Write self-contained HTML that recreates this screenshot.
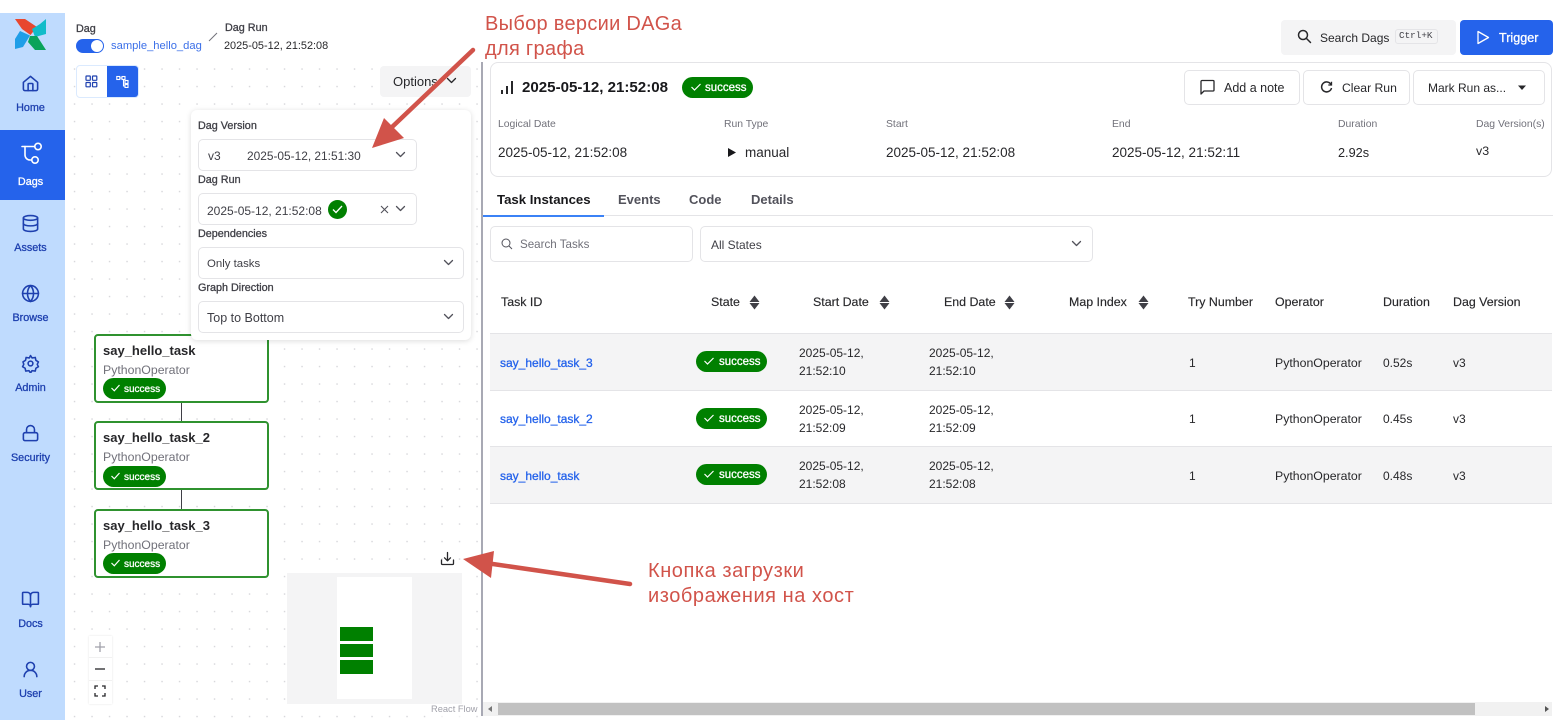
<!DOCTYPE html>
<html lang="en"><head><meta charset="utf-8"><title>Airflow Dag Run</title>
<style>
*{box-sizing:border-box}
html{background:#fff}
html,body{margin:0;padding:0;width:1560px;height:720px;overflow:hidden}
body{background:#fff;font-family:"Liberation Sans",sans-serif;color:#27272a;filter:blur(.3px)}
.a{position:absolute}
.t{position:absolute;white-space:nowrap;line-height:20px;font-size:12.5px}
.b{font-weight:bold}
.m{-webkit-text-stroke:.3px currentColor}
.h{-webkit-text-stroke:.15px currentColor}
.nav{position:absolute;left:0;width:61px;text-align:center;font-size:10.800px;line-height:14px;color:#1e40af;-webkit-text-stroke:.3px currentColor}
.ic{position:absolute;fill:none;stroke:#1e40af;stroke-width:2;stroke-linecap:round;stroke-linejoin:round}
.box{position:absolute;background:#fff;border:1px solid #e4e4e7;border-radius:5px}
.chev{position:absolute;fill:none;stroke:#52525b;stroke-width:1.300;stroke-linecap:round;stroke-linejoin:round}
.badge{position:absolute;background:#008000;border-radius:11px;color:#fff;font-size:11.500px;line-height:23px;-webkit-text-stroke:.3px #fff;white-space:nowrap}
.badge svg{position:absolute;fill:none;stroke:#fff;stroke-width:1.200}
.sm{font-size:10px}
.node{position:absolute;left:94px;width:175px;height:69px;background:#fff;border:2px solid #2f922f;border-radius:4px}
.row{position:absolute;left:490px;width:1062px;border-bottom:1px solid #e4e4e7}
.lnk{color:#2563eb;font-size:12px;-webkit-text-stroke:.3px currentColor}
.s{position:absolute;fill:#3f3f46}
.red{position:absolute;white-space:nowrap;color:#d1534a;font-size:20px;line-height:26px}
.lab{font-size:10.800px;color:#3f3f46;-webkit-text-stroke:.3px currentColor}
.cap{font-size:10.400px;color:#71717a}
.dt{font-size:12px;line-height:18px}
.hd{font-size:12.400px;-webkit-text-stroke:.15px currentColor}
</style></head><body>

<!-- graph background -->
<div class="a" style="left:65px;top:60px;width:416px;height:660px;background-image:radial-gradient(circle,#d4d4d8 0.6px,transparent 0.9px);background-size:17.5px 17.5px;background-position:.8px .3px"></div>

<!-- sidebar -->
<div class="a" style="left:0;top:13px;width:65px;height:707px;background:#bfdbfe"></div>
<div class="a" style="left:0;top:130px;width:65px;height:70px;background:#2563eb"></div>
<svg class="a" style="left:0;top:0" width="60" height="60" viewBox="0 0 60 60">
<path d="M15 19 25 19 37 27 30.500 35 22 29Z" fill="#e8472f"/>
<path d="M46 19 46 34 35 37 32 29 40 24Z" fill="#11bcc9"/>
<path d="M46 50 35 50 28 42 30 36 37 36Z" fill="#0aa35a"/>
<path d="M15 49 15 39 20 31 30 35.500 23 47Z" fill="#1f9ee8"/></svg>

<svg class="ic" style="left:21px;top:74px" width="19" height="19" viewBox="0 0 24 24"><path d="M3 10.500 12 3l9 7.500V19a2 2 0 0 1-2 2H5a2 2 0 0 1-2-2z"/><path d="M9 21v-8a1 1 0 0 1 1-1h4a1 1 0 0 1 1 1v8"/></svg>
<div class="nav" style="top:101px">Home</div>
<svg class="ic" style="left:20px;top:142px;stroke:#fff;stroke-width:1.600" width="23" height="23" viewBox="0 0 23 23"><path d="M2 4.500H14.500"/><path d="M5 4.500V13a5 5 0 0 0 5 5H11.500"/><circle cx="18" cy="4.500" r="3.200"/><circle cx="15" cy="18" r="3.200"/></svg>
<div class="nav" style="top:175px;color:#fff">Dags</div>
<svg class="ic" style="left:21px;top:214px" width="19" height="19" viewBox="0 0 24 24"><ellipse cx="12" cy="5" rx="9" ry="3"/><path d="M3 5v14c0 1.700 4 3 9 3s9-1.300 9-3V5"/><path d="M3 12c0 1.700 4 3 9 3s9-1.300 9-3"/></svg>
<div class="nav" style="top:241px">Assets</div>
<svg class="ic" style="left:21px;top:284px" width="19" height="19" viewBox="0 0 24 24"><circle cx="12" cy="12" r="10"/><path d="M2 12h20"/><path d="M12 2a15 15 0 0 1 0 20a15 15 0 0 1 0-20z"/></svg>
<div class="nav" style="top:311px">Browse</div>
<svg class="ic" style="left:21px;top:354px" width="19" height="19" viewBox="0 0 24 24"><path d="M12 2l2 3 4-.6.800 3.600 3.200 2-1.500 3 1.500 3-3.200 2-.8 3.600-4-.6-2 3-2-3-4 .6-.8-3.600-3.200-2 1.500-3L2.500 10l3.200-2 .8-3.600 4 .6z"/><circle cx="12" cy="12" r="3"/></svg>
<div class="nav" style="top:381px">Admin</div>
<svg class="ic" style="left:21px;top:424px" width="19" height="19" viewBox="0 0 24 24"><rect x="3" y="11" width="18" height="10" rx="2"/><path d="M7 11V7a5 5 0 0 1 10 0v4"/></svg>
<div class="nav" style="top:451px">Security</div>
<svg class="ic" style="left:21px;top:590px" width="19" height="19" viewBox="0 0 24 24"><path d="M12 7v14"/><path d="M3 18a1 1 0 0 1-1-1V4a1 1 0 0 1 1-1h5a4 4 0 0 1 4 4 4 4 0 0 1 4-4h5a1 1 0 0 1 1 1v13a1 1 0 0 1-1 1h-6a3 3 0 0 0-3 3 3 3 0 0 0-3-3z"/></svg>
<div class="nav" style="top:617px">Docs</div>
<svg class="ic" style="left:21px;top:660px" width="19" height="19" viewBox="0 0 24 24"><circle cx="12" cy="8" r="5"/><path d="M20 21a8 8 0 0 0-16 0"/></svg>
<div class="nav" style="top:687px">User</div>

<!-- breadcrumb -->
<div class="t lab" style="left:76px;top:19px">Dag</div>
<div class="a" style="left:76px;top:39px;width:28px;height:14px;background:#2563eb;border-radius:7px"></div>
<div class="a" style="left:91px;top:40px;width:12px;height:12px;background:#fff;border-radius:50%"></div>
<div class="t" style="left:111px;top:36px;font-size:11.200px;color:#3b6fe8">sample_hello_dag</div>
<svg class="a" style="left:208px;top:32px" width="10" height="10"><path d="M1 9 9 1" stroke="#71717a" stroke-width="1"/></svg>
<div class="t lab" style="left:225px;top:18px">Dag Run</div>
<div class="t" style="left:224px;top:36px;font-size:10.900px">2025-05-12, 21:52:08</div>

<!-- view toggle -->
<div class="a" style="left:76px;top:65px;width:63px;height:33px;border:1px solid #dbeafe;border-radius:4px;background:#fff"></div>
<div class="a" style="left:107px;top:66px;width:31px;height:31px;background:#2563eb;border-radius:0 3px 3px 0"></div>
<svg class="a" style="left:85px;top:75px" width="13" height="13" viewBox="0 0 13 13" fill="none" stroke="#1e40af" stroke-width="1.200"><rect x="1" y="1" width="4.300" height="4.300" rx=".5"/><rect x="7.500" y="1" width="4.300" height="4.300" rx=".5"/><rect x="1" y="7.500" width="4.300" height="4.300" rx=".5"/><rect x="7.500" y="7.500" width="4.300" height="4.300" rx=".5"/></svg>
<svg class="a" style="left:116px;top:75px" width="13" height="13" viewBox="0 0 13 13" fill="none" stroke="#fff" stroke-width="1.100"><rect x=".8" y="1.500" width="3" height="3"/><rect x="6" y="1.500" width="3" height="3"/><rect x="9" y="5.500" width="3" height="3"/><rect x="9" y="9.500" width="3" height="3"/><path d="M4 3H6M7.500 4.500V11H9"/></svg>

<!-- Options button -->
<div class="a" style="left:380px;top:66px;width:91px;height:31px;background:#f4f4f5;border-radius:4px"></div>
<div class="t" style="left:393px;top:72px;font-size:13px">Options</div>
<svg class="chev" style="left:446px;top:77px;stroke:#27272a" width="11" height="8"><path d="M1.500 1.500 5.500 5.500 9.500 1.500"/></svg>

<!-- nodes -->
<div class="a" style="left:181px;top:403px;width:1px;height:19px;background:#3f3f46"></div>
<div class="a" style="left:181px;top:490px;width:1px;height:20px;background:#3f3f46"></div>

<div class="node" style="top:334px"></div>
<div class="t b" style="left:103px;top:341px;font-size:13px">say_hello_task</div>
<div class="t" style="left:103px;top:360px;font-size:12.300px;color:#71717a">PythonOperator</div>
<div class="badge sm" style="left:103px;top:378px;width:63px;height:21px;padding-left:21px;font-size:10px"><svg style="left:8px;top:6px" width="9" height="8"><path d="M.5 4 3.300 6.800 8.500 1"/></svg>success</div>

<div class="node" style="top:421px"></div>
<div class="t b" style="left:103px;top:428px;font-size:13px">say_hello_task_2</div>
<div class="t" style="left:103px;top:447px;font-size:12.300px;color:#71717a">PythonOperator</div>
<div class="badge sm" style="left:103px;top:466px;width:63px;height:21px;padding-left:21px;font-size:10px"><svg style="left:8px;top:6px" width="9" height="8"><path d="M.5 4 3.300 6.800 8.500 1"/></svg>success</div>

<div class="node" style="top:509px"></div>
<div class="t b" style="left:103px;top:516px;font-size:13px">say_hello_task_3</div>
<div class="t" style="left:103px;top:535px;font-size:12.300px;color:#71717a">PythonOperator</div>
<div class="badge sm" style="left:103px;top:553px;width:63px;height:21px;padding-left:21px;font-size:10px"><svg style="left:8px;top:6px" width="9" height="8"><path d="M.5 4 3.300 6.800 8.500 1"/></svg>success</div>

<!-- options panel -->
<div class="a" style="left:191px;top:110px;width:280px;height:230px;background:#fff;border-radius:6px;box-shadow:0 1px 6px rgba(0,0,0,.14)"></div>
<div class="t lab" style="left:198px;top:116px">Dag Version</div>
<div class="box" style="left:198px;top:139px;width:219px;height:32px"></div>
<div class="t" style="left:208px;top:146px;font-size:12px;color:#3f3f46">v3</div>
<div class="t" style="left:247px;top:146px;font-size:11.900px;color:#3f3f46">2025-05-12, 21:51:30</div>
<svg class="chev" style="left:395px;top:151px" width="11" height="8"><path d="M1.500 1.500 5.500 5.500 9.500 1.500"/></svg>
<div class="t lab" style="left:198px;top:170px">Dag Run</div>
<div class="box" style="left:198px;top:193px;width:219px;height:32px"></div>
<div class="t" style="left:207px;top:201px;font-size:12px;color:#3f3f46">2025-05-12, 21:52:08</div>
<div class="a" style="left:328px;top:200px;width:19px;height:19px;border-radius:50%;background:#008000"></div>
<svg class="a" style="left:332px;top:205px" width="11" height="9" fill="none" stroke="#fff" stroke-width="1.300"><path d="M1 4.500 4 7.500 10 1"/></svg>
<svg class="a" style="left:380px;top:205px" width="9" height="9" stroke="#52525b" stroke-width="1.100"><path d="M1 1 8 8M8 1 1 8"/></svg>
<svg class="chev" style="left:395px;top:205px" width="11" height="8"><path d="M1.500 1.500 5.500 5.500 9.500 1.500"/></svg>
<div class="t lab" style="left:198px;top:224px">Dependencies</div>
<div class="box" style="left:198px;top:247px;width:266px;height:32px"></div>
<div class="t" style="left:207px;top:254px;font-size:11.400px;color:#3f3f46">Only tasks</div>
<svg class="chev" style="left:443px;top:259px" width="11" height="8"><path d="M1.500 1.500 5.500 5.500 9.500 1.500"/></svg>
<div class="t lab" style="left:198px;top:278px">Graph Direction</div>
<div class="box" style="left:198px;top:301px;width:266px;height:32px"></div>
<div class="t" style="left:207px;top:308px;font-size:12.500px;color:#3f3f46">Top to Bottom</div>
<svg class="chev" style="left:443px;top:313px" width="11" height="8"><path d="M1.500 1.500 5.500 5.500 9.500 1.500"/></svg>

<!-- download, minimap, controls -->
<svg class="a" style="left:440px;top:551px" width="15" height="15" viewBox="0 0 15 15" fill="none" stroke="#27272a" stroke-width="1.300" stroke-linecap="round" stroke-linejoin="round"><path d="M7.500 1.500V9.500M4.500 6.800 7.500 9.800 10.500 6.800"/><path d="M1.500 9V12.500a1 1 0 0 0 1 1H12.500a1 1 0 0 0 1-1V9"/></svg>
<div class="a" style="left:287px;top:573px;width:175px;height:131px;background:#f4f4f5"></div>
<div class="a" style="left:337px;top:577px;width:75px;height:122px;background:#fff"></div>
<div class="a" style="left:340px;top:627px;width:33px;height:14px;background:#008000"></div>
<div class="a" style="left:340px;top:644px;width:33px;height:13px;background:#008000"></div>
<div class="a" style="left:340px;top:660px;width:33px;height:14px;background:#008000"></div>
<div class="a" style="left:428px;top:704px;width:48px;height:15px;background:rgba(255,255,255,.6)"></div>
<div class="t" style="left:431px;top:699px;font-size:9.300px;color:#a1a1aa">React Flow</div>
<div class="a" style="left:89px;top:636px;width:23px;height:68px;background:#fff;box-shadow:0 0 2px rgba(0,0,0,.12)"></div>
<div class="a" style="left:89px;top:657px;width:23px;height:1px;background:#f1f1f1"></div>
<div class="a" style="left:89px;top:680px;width:23px;height:1px;background:#f1f1f1"></div>
<svg class="a" style="left:88px;top:635px" width="24" height="69" fill="none" stroke-width="1.300"><path d="M12 7V17M7 12H17" stroke="#a1a1aa"/><path d="M7 34H17" stroke="#27272a"/><path d="M7 54V51H10M14 51H17V54M17 58V61H14M10 61H7V58" stroke="#27272a"/></svg>

<!-- divider -->
<div class="a" style="left:481px;top:62px;width:2px;height:654px;background:#a8a9b4"></div>

<!-- top right -->
<div class="a" style="left:1281px;top:20px;width:175px;height:35px;background:#f4f4f5;border-radius:4px"></div>
<svg class="a" style="left:1297px;top:29px" width="15" height="15" viewBox="0 0 15 15" fill="none" stroke="#27272a" stroke-width="1.500" stroke-linecap="round"><circle cx="6" cy="6" r="4.500"/><path d="M9.500 9.500 13.500 13.500"/></svg>
<div class="t" style="left:1320px;top:28px;font-size:12px">Search Dags</div>
<div class="a" style="left:1395px;top:29px;width:43px;height:15px;background:#f4f4f5;border:1px solid #e4e4e7;border-radius:3px"></div>
<div class="t" style="left:1399px;top:26px;font-size:9.300px;font-family:'Liberation Mono',monospace;color:#3f3f46">Ctrl+K</div>
<div class="a" style="left:1460px;top:20px;width:93px;height:35px;background:#2563eb;border-radius:4px"></div>
<svg class="a" style="left:1476px;top:30px" width="14" height="15" viewBox="0 0 14 15" fill="none" stroke="#fff" stroke-width="1.300" stroke-linejoin="round"><path d="M2 1.500 12.500 7.500 2 13.500Z"/></svg>
<div class="t m" style="left:1499px;top:28px;font-size:12.600px;color:#fff">Trigger</div>

<!-- header card -->
<div class="a" style="left:490px;top:62px;width:1062px;height:115px;border:1px solid #e4e4e7;border-radius:8px"></div>
<svg class="a" style="left:500px;top:80px" width="14" height="15" fill="#27272a"><rect x="1" y="10" width="2" height="4"/><rect x="6" y="6" width="2" height="8"/><rect x="11" y="1" width="2" height="13"/></svg>
<div class="t b" style="left:522px;top:78px;font-size:15.100px;color:#18181b">2025-05-12, 21:52:08</div>
<div class="badge" style="left:682px;top:77px;width:71px;height:21px;padding-left:23px"><svg style="left:9px;top:6px" width="10" height="8"><path d="M.5 4 3.500 7 9.500 1"/></svg>success</div>

<div class="box" style="left:1184px;top:70px;width:116px;height:35px"></div>
<svg class="a" style="left:1199px;top:79px" width="16" height="16" viewBox="0 0 16 16" fill="none" stroke="#27272a" stroke-width="1.300" stroke-linejoin="round"><path d="M2 2.500a1 1 0 0 1 1-1H14a1 1 0 0 1 1 1V11a1 1 0 0 1-1 1H5L2 15z"/></svg>
<div class="t" style="left:1224px;top:78px;font-size:12.500px">Add a note</div>
<div class="box" style="left:1303px;top:70px;width:107px;height:35px"></div>
<svg class="a" style="left:1320px;top:81px" width="13" height="13" viewBox="0 0 13 13" fill="none" stroke="#27272a" stroke-width="1.500"><path d="M11 3.500A5 5 0 1 0 11.500 7"/><path d="M11.500 .8V4H8.300" stroke-width="1.300"/></svg>
<div class="t" style="left:1342px;top:78px;font-size:12.200px">Clear Run</div>
<div class="box" style="left:1413px;top:70px;width:132px;height:35px"></div>
<div class="t" style="left:1428px;top:78px;font-size:12px">Mark Run as...</div>
<svg class="a" style="left:1517px;top:85px" width="10" height="6" fill="#27272a"><path d="M1 .5H9L5 5Z"/></svg>

<div class="t cap" style="left:498px;top:115px">Logical Date</div>
<div class="t cap" style="left:724px;top:115px">Run Type</div>
<div class="t cap" style="left:886px;top:115px">Start</div>
<div class="t cap" style="left:1112px;top:115px">End</div>
<div class="t cap" style="left:1338px;top:115px">Duration</div>
<div class="t cap" style="left:1476px;top:115px">Dag Version(s)</div>
<div class="t" style="left:498px;top:143px;font-size:13.500px">2025-05-12, 21:52:08</div>
<svg class="a" style="left:728px;top:148px" width="8" height="9" fill="#18181b"><path d="M0 0 8 4.500 0 9Z"/></svg>
<div class="t" style="left:745px;top:143px;font-size:13.500px">manual</div>
<div class="t" style="left:886px;top:143px;font-size:13.500px">2025-05-12, 21:52:08</div>
<div class="t" style="left:1112px;top:143px;font-size:13.500px">2025-05-12, 21:52:11</div>
<div class="t" style="left:1338px;top:143px;font-size:12.700px">2.92s</div>
<div class="t" style="left:1476px;top:141px;font-size:12.400px">v3</div>

<!-- tabs -->
<div class="a" style="left:483px;top:215px;width:1070px;height:1px;background:#e4e4e7"></div>
<div class="a" style="left:483px;top:215px;width:121px;height:2px;background:#3b82f6"></div>
<div class="t b" style="left:497px;top:190px;font-size:13.200px;color:#18181b">Task Instances</div>
<div class="t b" style="left:618px;top:190px;font-size:13px;color:#52525b">Events</div>
<div class="t b" style="left:689px;top:190px;font-size:13px;color:#52525b">Code</div>
<div class="t b" style="left:751px;top:190px;font-size:13px;color:#52525b">Details</div>

<!-- filters -->
<div class="box" style="left:490px;top:226px;width:203px;height:36px"></div>
<svg class="a" style="left:501px;top:238px" width="12" height="12" viewBox="0 0 12 12" fill="none" stroke="#52525b" stroke-width="1"><circle cx="5" cy="5" r="4"/><path d="M8 8 11 11"/></svg>
<div class="t" style="left:520px;top:235px;font-size:11.600px;color:#71717a">Search Tasks</div>
<div class="box" style="left:700px;top:226px;width:393px;height:36px"></div>
<div class="t" style="left:711px;top:235px;font-size:12px;color:#3f3f46">All States</div>
<svg class="chev" style="left:1071px;top:240px" width="11" height="8"><path d="M1.500 1.500 5.500 5.500 9.500 1.500"/></svg>

<!-- table head -->
<div class="t hd" style="left:501px;top:292px">Task ID</div>
<div class="t hd" style="left:711px;top:292px">State</div>
<svg class="s" style="left:749px;top:295px" width="11" height="15"><path d="M5.500 .5 10.500 7H.5ZM.5 8H10.500L5.500 14.500Z"/></svg>
<div class="t hd" style="left:813px;top:292px">Start Date</div>
<svg class="s" style="left:879px;top:295px" width="11" height="15"><path d="M5.500 .5 10.500 7H.5ZM.5 8H10.500L5.500 14.500Z"/></svg>
<div class="t hd" style="left:944px;top:292px">End Date</div>
<svg class="s" style="left:1004px;top:295px" width="11" height="15"><path d="M5.500 .5 10.500 7H.5ZM.5 8H10.500L5.500 14.500Z"/></svg>
<div class="t hd" style="left:1069px;top:292px">Map Index</div>
<svg class="s" style="left:1138px;top:295px" width="11" height="15"><path d="M5.500 .5 10.500 7H.5ZM.5 8H10.500L5.500 14.500Z"/></svg>
<div class="t hd" style="left:1188px;top:292px">Try Number</div>
<div class="t hd" style="left:1275px;top:292px">Operator</div>
<div class="t hd" style="left:1383px;top:292px">Duration</div>
<div class="t hd" style="left:1453px;top:292px">Dag Version</div>

<!-- rows -->
<div class="a" style="left:490px;top:333px;width:1062px;height:1px;background:#e4e4e7"></div>
<div class="row" style="top:334px;height:57px;background:#f4f4f5"></div>
<div class="row" style="top:391px;height:56px;background:#fff"></div>
<div class="row" style="top:447px;height:57px;background:#f4f4f5"></div>

<div class="t lnk" style="left:500px;top:353px">say_hello_task_3</div>
<div class="badge" style="left:696px;top:351px;width:71px;height:21px;padding-left:23px"><svg style="left:8px;top:6px" width="10" height="8"><path d="M.5 4 3.500 7 9.500 1"/></svg>success</div>
<div class="t dt" style="left:799px;top:344px">2025-05-12,<br>21:52:10</div>
<div class="t dt" style="left:929px;top:344px">2025-05-12,<br>21:52:10</div>
<div class="t" style="left:1189px;top:353px;font-size:12px">1</div>
<div class="t" style="left:1275px;top:353px;font-size:12.300px">PythonOperator</div>
<div class="t" style="left:1383px;top:353px;font-size:12px">0.52s</div>
<div class="t" style="left:1453px;top:353px;font-size:12px">v3</div>

<div class="t lnk" style="left:500px;top:409px">say_hello_task_2</div>
<div class="badge" style="left:696px;top:408px;width:71px;height:21px;padding-left:23px"><svg style="left:8px;top:6px" width="10" height="8"><path d="M.5 4 3.500 7 9.500 1"/></svg>success</div>
<div class="t dt" style="left:799px;top:401px">2025-05-12,<br>21:52:09</div>
<div class="t dt" style="left:929px;top:401px">2025-05-12,<br>21:52:09</div>
<div class="t" style="left:1189px;top:409px;font-size:12px">1</div>
<div class="t" style="left:1275px;top:409px;font-size:12.300px">PythonOperator</div>
<div class="t" style="left:1383px;top:409px;font-size:12px">0.45s</div>
<div class="t" style="left:1453px;top:409px;font-size:12px">v3</div>

<div class="t lnk" style="left:500px;top:466px">say_hello_task</div>
<div class="badge" style="left:696px;top:464px;width:71px;height:21px;padding-left:23px"><svg style="left:8px;top:6px" width="10" height="8"><path d="M.5 4 3.500 7 9.500 1"/></svg>success</div>
<div class="t dt" style="left:799px;top:457px">2025-05-12,<br>21:52:08</div>
<div class="t dt" style="left:929px;top:457px">2025-05-12,<br>21:52:08</div>
<div class="t" style="left:1189px;top:466px;font-size:12px">1</div>
<div class="t" style="left:1275px;top:466px;font-size:12.300px">PythonOperator</div>
<div class="t" style="left:1383px;top:466px;font-size:12px">0.48s</div>
<div class="t" style="left:1453px;top:466px;font-size:12px">v3</div>

<!-- scrollbar -->
<div class="a" style="left:483px;top:702px;width:1069px;height:14px;background:#f1f1f1"></div>
<div class="a" style="left:498px;top:703px;width:977px;height:12px;background:#c1c1c1"></div>
<svg class="a" style="left:486px;top:705px" width="8" height="8" fill="#777"><path d="M6 1V7L2 4Z"/></svg>
<svg class="a" style="left:1543px;top:705px" width="8" height="8" fill="#555"><path d="M2 1V7L6 4Z"/></svg>

<!-- annotations -->
<svg class="a" style="left:0;top:0" width="1560" height="720" fill="#d1534a" stroke="none">
<path d="M473 50 391 128" stroke="#d1534a" stroke-width="4.500" stroke-linecap="round"/>
<path d="M372 148 384 118 404 138Z"/>
<path d="M630 584 486 563" stroke="#d1534a" stroke-width="4.500" stroke-linecap="round"/>
<path d="M463 559 494 551 491 578Z"/>
</svg>
<div class="red" style="left:485px;top:11px;letter-spacing:.3px">Выбор версии DAGа</div>
<div class="red" style="left:485px;top:36px;letter-spacing:.3px">для графа</div>
<div class="red" style="left:648px;top:558px;letter-spacing:.55px">Кнопка загрузки</div>
<div class="red" style="left:648px;top:583px;letter-spacing:.55px">изображения на хост</div>

</body></html>
